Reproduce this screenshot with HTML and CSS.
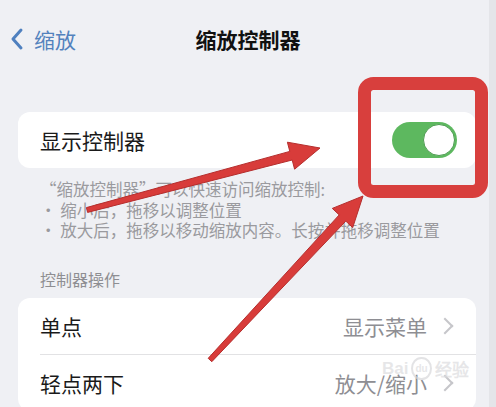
FILE: index.html
```html
<!DOCTYPE html>
<html lang="zh-CN">
<head>
    <meta charset="UTF-8">
    <meta name="viewport" content="width=device-width, initial-scale=1.0">
    <title>缩放控制器</title>
    <link rel="stylesheet" href="styles.css">
</head>
<body>
    <div class="page">
        <header class="nav">
            <div class="back">
                <svg class="back-icon" width="16" height="24" viewBox="0 0 16 24">
                    <path d="M12 3 L4 12 L12 21" fill="none" stroke="#4f80bf" stroke-width="3" stroke-linecap="round" stroke-linejoin="round"/>
                </svg>
                <span>缩放</span>
            </div>
            <h1>缩放控制器</h1>
            <div></div>
        </header>

        <section class="card">
            <div class="row">
                <span class="label">显示控制器</span>
                <span class="toggle"><span class="knob"></span></span>
            </div>
        </section>

        <p class="note">
            “缩放控制器”可以快速访问缩放控制:<br>
            · 缩小后，拖移以调整位置<br>
            · 放大后，拖移以移动缩放内容。长按并拖移调整位置
        </p>

        <div class="group-title">控制器操作</div>

        <section class="card">
            <div class="row">
                <span class="label">单点</span>
                <span class="value">显示菜单<i class="chev"></i></span>
            </div>
            <div class="row line">
                <span class="label">轻点两下</span>
                <span class="value">放大/缩小<i class="chev"></i></span>
            </div>
        </section>

        <div class="mark">Bai<span class="du">du</span>经验</div>

        <svg class="marks" width="496" height="407" viewBox="0 0 496 407">
            <rect x="364.5" y="83.5" width="117" height="108" rx="9" fill="none" stroke="#d83f3d" stroke-width="13"/>
            <polygon points="86.4,207.6 289.8,151.4 287.4,142.2 320,148 294.6,169.2 292.2,160 87.6,212.4" fill="#d83c3a" stroke="#b52e2d" stroke-width="1" stroke-linejoin="round"/>
            <polygon points="208.2,358.3 339.2,214.9 332.3,208.4 363,196 352.7,227.6 345.8,221.1 211.8,361.7" fill="#d83c3a" stroke="#b52e2d" stroke-width="1" stroke-linejoin="round"/>
        </svg>
    </div>
</body>
</html>
```

FILE: styles.css
```css
body{
    margin: 0;
    background: #eff0f4;
    font-family: "Noto Sans CJK SC", "Noto Sans", sans-serif;
}
.page{
    position: relative;
    width: 496px;
    height: 407px;
    overflow: hidden;
    background: linear-gradient(to right, #eff0f4 489px, #e4e5e9 489px);
}
.nav{
    height: 78px;
    display: grid;
    grid-template-columns: 1fr auto 1fr;
    align-items: center;
    margin-bottom: 34px;
}
.back{
    display: flex;
    align-items: center;
    gap: 9px;
    padding-left: 9px;
    color: #5382bd;
    font-size: 21px;
}
.nav h1{
    margin: 0;
    font-size: 21px;
    font-weight: 700;
    color: #111;
}
.card{
    margin: 0 20px 0 18px;
    background: #fff;
    border-radius: 12px;
}
.row{
    height: 56px;
    display: flex;
    align-items: center;
    justify-content: space-between;
    padding: 0 19px 0 22px;
    font-size: 21px;
    color: #1a1a1a;
}
.line{
    height: 57px;
    background: linear-gradient(#e2e2e4, #e2e2e4) no-repeat 22px 0 / 100% 1px;
}
.toggle{
    width: 65px;
    height: 36px;
    border-radius: 18px;
    background: #5db85f;
    display: flex;
    justify-content: flex-end;
    align-items: center;
    padding: 2px;
    box-sizing: border-box;
}
.knob{
    width: 32px;
    height: 32px;
    border-radius: 50%;
    background: #fff;
    box-sizing: border-box;
    border: 1px solid #4e9c52;
}
.note{
    margin: 0;
    padding: 11px 20px 0 40px;
    font-size: 16.5px;
    line-height: 20.5px;
    color: #9a9a9e;
    height: 89px;
}
.group-title{
    padding-left: 40px;
    font-size: 16px;
    line-height: 22px;
    color: #8e8e92;
    margin-bottom: 8px;
}
.value{
    display: flex;
    align-items: center;
    color: #8e8e93;
}
.chev{
    width: 10px;
    height: 10px;
    border-top: 2px solid #c6c6ca;
    border-right: 2px solid #c6c6ca;
    transform: rotate(45deg);
    margin: 0 6px 0 12px;
}
.mark{
    position: absolute;
    left: 382px;
    top: 356px;
    font-family: "Liberation Sans", sans-serif;
    font-size: 17px;
    font-weight: 700;
    color: rgba(220, 220, 222, 0.7);
    display: flex;
    align-items: center;
}
.mark .du{
    font-size: 10px;
    margin: 0 3px;
    padding: 4px 2px;
    border-radius: 50%;
    border: 2px solid rgba(215, 215, 218, 0.7);
}
.marks{
    position: absolute;
    left: 0;
    top: 0;
}
```
